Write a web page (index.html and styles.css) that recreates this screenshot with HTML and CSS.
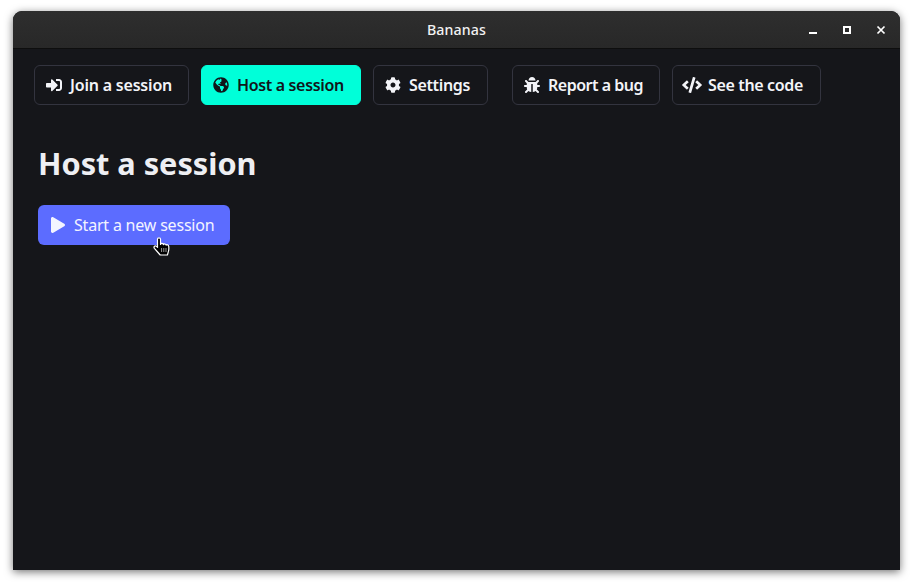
FILE: index.html
```html
<!DOCTYPE html>
<html lang="en">
<head>
<meta charset="utf-8">
<title>Bananas</title>
<link rel="stylesheet" href="styles.css">
</head>
<body>
<div class="window">
  <header class="titlebar">
    <span class="title">Bananas</span>
    <div class="controls">
      <svg class="ctl" viewBox="0 0 10 10"><rect x="1" y="7" width="8" height="2" fill="#fff"/></svg>
      <svg class="ctl" viewBox="0 0 10 10"><path d="M1 1h8v8H1z M3 3v4h4V3z" fill="#fff" fill-rule="evenodd"/></svg>
      <svg class="ctl" viewBox="0 0 10 10"><path d="M1.5 1.5l7 7M8.5 1.5l-7 7" stroke="#fff" stroke-width="1.7" fill="none"/></svg>
    </div>
  </header>
  <main class="content">
    <nav class="nav">
      <div class="group">
        <a class="btn w-join"><span class="slot"><svg class="icon" viewBox="0 0 512 512"><path d="M416 448h-84c-6.6 0-12-5.4-12-12v-40c0-6.6 5.4-12 12-12h84c17.7 0 32-14.3 32-32V160c0-17.7-14.3-32-32-32h-84c-6.6 0-12-5.4-12-12V76c0-6.6 5.4-12 12-12h84c53 0 96 43 96 96v192c0 53-43 96-96 96zm-47-201L201 79c-15-15-41-4.5-41 17v96H24c-13.3 0-24 10.7-24 24v96c0 13.3 10.7 24 24 24h136v96c0 21.5 26 32 41 17l168-168c9.3-9.4 9.3-24.6 0-34z"/></svg></span>Join a session</a>
        <a class="btn active w-host"><span class="slot"><svg class="icon" viewBox="0 0 496 512"><path d="M248 8C111.03 8 0 119.03 0 256s111.03 248 248 248 248-111.03 248-248S384.97 8 248 8zm82.29 357.6c-3.9 3.88-7.99 7.95-11.31 11.28-2.99 3-5.1 6.7-6.17 10.71-1.51 5.66-2.73 11.38-4.77 16.87l-17.39 46.85c-13.76 3-28 4.69-42.65 4.69v-27.38c1.69-12.62-7.64-36.26-22.63-51.25-6-6-9.37-14.14-9.37-22.63v-32.01c0-11.64-6.27-22.34-16.46-27.97-14.37-7.95-34.81-19.06-48.81-26.11-11.48-5.78-22.1-13.14-31.65-21.75l-.8-.72a114.792 114.792 0 0 1-18.06-20.74c-9.38-13.77-24.66-36.42-34.59-51.14 20.47-45.5 57.36-82.04 103.2-101.89l24.01 12.01C203.48 89.74 216 82.01 216 70.11v-11.3c7.99-1.29 16.12-2.11 24.45-2.42l28.3 28.3c6.25 6.25 6.25 16.38 0 22.63L264 112l-10.34 10.34c-3.12 3.12-3.12 8.19 0 11.31l4.69 4.69c3.12 3.12 3.12 8.19 0 11.31l-8 8a8.008 8.008 0 0 1-5.66 2.34h-8.99c-2.08 0-4.08.81-5.58 2.27l-9.92 9.65a8.008 8.008 0 0 0-1.58 9.31l15.59 31.19c2.66 5.32-1.21 11.58-7.15 11.58h-5.64c-1.93 0-3.79-.7-5.24-1.96l-9.28-8.06a16.017 16.017 0 0 0-15.55-3.1l-31.17 10.39a11.95 11.95 0 0 0-8.17 11.34c0 4.53 2.56 8.66 6.61 10.69l11.08 5.54c9.41 4.71 19.79 7.16 30.31 7.16s22.59 27.29 32 32h66.75c8.49 0 16.62 3.37 22.63 9.37l13.69 13.69a30.503 30.503 0 0 1 8.93 21.57 46.536 46.536 0 0 1-13.72 32.98zM417 274.25c-5.79-1.45-10.84-5-14.15-9.97l-17.98-26.97a23.97 23.97 0 0 1 0-26.62l19.59-29.38c2.32-3.47 5.5-6.29 9.24-8.15l12.98-6.49C440.2 193.59 448 223.87 448 256c0 8.67-.74 17.16-1.82 25.54L417 274.25z"/></svg></span>Host a session</a>
        <a class="btn w-settings"><span class="slot"><svg class="icon" viewBox="0 0 512 512"><path d="M487.4 315.7l-42.6-24.6c4.3-23.2 4.3-47 0-70.2l42.6-24.6c4.9-2.8 7.1-8.6 5.5-14-11.1-35.6-30-67.8-54.7-94.6-3.8-4.1-10-5.1-14.8-2.3L380.8 110c-17.9-15.4-38.5-27.3-60.8-35.1V25.8c0-5.6-3.9-10.5-9.4-11.7-36.7-8.2-74.3-7.8-109.2 0-5.5 1.2-9.4 6.1-9.4 11.7V75c-22.2 7.9-42.8 19.8-60.8 35.1L88.7 85.5c-4.9-2.8-11-1.9-14.8 2.3-24.7 26.7-43.6 58.9-54.7 94.6-1.7 5.4.6 11.2 5.5 14L67.3 221c-4.3 23.2-4.3 47 0 70.2l-42.6 24.6c-4.9 2.8-7.1 8.6-5.5 14 11.1 35.6 30 67.8 54.7 94.6 3.8 4.1 10 5.1 14.8 2.3l42.6-24.6c17.9 15.4 38.5 27.3 60.8 35.1v49.2c0 5.6 3.9 10.5 9.4 11.7 36.7 8.2 74.3 7.8 109.2 0 5.5-1.2 9.4-6.1 9.4-11.7v-49.2c22.2-7.9 42.8-19.8 60.8-35.1l42.6 24.6c4.9 2.8 11 1.9 14.8-2.3 24.7-26.7 43.6-58.9 54.7-94.6 1.5-5.5-.7-11.3-5.6-14.1zM256 336c-44.1 0-80-35.9-80-80s35.9-80 80-80 80 35.9 80 80-35.9 80-80 80z"/></svg></span>Settings</a>
      </div>
      <div class="group">
        <a class="btn w-bug"><span class="slot"><svg class="icon" viewBox="0 0 512 512"><path d="M511.988 288.9c-.478 17.43-15.217 31.1-32.653 31.1H424v16c0 21.864-4.882 42.584-13.6 61.145l60.228 60.228c12.496 12.497 12.496 32.758 0 45.255-12.498 12.497-32.759 12.496-45.256 0l-54.736-54.736C345.886 467.965 314.351 480 280 480V236c0-6.627-5.373-12-12-12h-24c-6.627 0-12 5.373-12 12v244c-34.351 0-65.886-12.035-90.636-32.108l-54.736 54.736c-12.498 12.497-32.759 12.496-45.256 0-12.496-12.497-12.496-32.758 0-45.255l60.228-60.228C92.882 378.584 88 357.864 88 336v-16H32.666C15.23 320 .491 306.33.013 288.9-.484 270.816 14.028 256 32 256h56v-58.745l-46.628-46.628c-12.496-12.497-12.496-32.758 0-45.255 12.498-12.497 32.758-12.497 45.256 0L141.255 160h229.489l54.627-54.627c12.498-12.497 32.758-12.497 45.256 0 12.496 12.497 12.496 32.758 0 45.255L424 197.255V256h56c17.972 0 32.484 14.816 31.988 32.9zM257 0c-61.856 0-112 50.144-112 112h224C369 50.144 318.856 0 257 0z"/></svg></span>Report a bug</a>
        <a class="btn w-code"><span class="slot"><svg class="icon icon-wide" viewBox="0 0 640 512"><path d="M278.9 511.5l-61-17.7c-6.4-1.8-10-8.5-8.2-14.9L346.2 8.7c1.8-6.4 8.5-10 14.9-8.2l61 17.7c6.4 1.8 10 8.5 8.2 14.9L293.8 503.3c-1.9 6.4-8.5 10.1-14.9 8.2zm-114-112.2l43.5-46.4c4.6-4.9 4.3-12.7-.8-17.2L117 256l90.6-79.7c5.1-4.5 5.5-12.3.8-17.2l-43.5-46.4c-4.5-4.8-12.1-5.1-17-.5L3.8 247.2c-5.1 4.7-5.1 12.8 0 17.5l144.1 135.1c4.9 4.6 12.5 4.4 17-.5zm327.2.6l144.1-135.1c5.1-4.7 5.1-12.8 0-17.5L492.1 112.1c-4.8-4.5-12.4-4.3-17 .5L431.6 159c-4.6 4.9-4.3 12.7.8 17.2L523 256l-90.6 79.7c-5.1 4.5-5.5 12.3-.8 17.2l43.5 46.4c4.5 4.9 12.1 5.1 17 .6z"/></svg></span>See the code</a>
      </div>
    </nav>
    <section class="page">
      <h1 class="heading">Host a session</h1>
      <a class="start"><span class="slot"><svg class="icon-play" viewBox="0 0 448 512"><path d="M424.4 214.7L72.4 6.6C43.8-10.3 0 6.1 0 47.9V464c0 37.5 40.7 60.1 72.4 41.3l352-208c31.4-18.5 31.5-64.1 0-82.6z"/></svg></span>Start a new session
        <svg class="cursor" viewBox="0 0 18 19"><path d="M4.5 2c0-1.6 3-1.6 3 0v5.4c.6-1.4 2.6-1.2 2.9.2.6-1 2.4-.8 2.7.5.7-.7 2.4-.4 2.6 1 .3 2.2.2 4-.4 5.8l-.9 3.1H7.2L4.6 15 1.4 11.4c-1.2-1.6.8-3.3 2.1-2l1 1z" fill="#000" stroke="#fff" stroke-width="1.2" stroke-linejoin="round"/><path d="M8.6 11v4M10.8 11v4M13 11v4" stroke="#fff" stroke-width=".6"/></svg>
      </a>
    </section>
  </main>
</div>
</body>
</html>
```

FILE: styles.css
```css
* { box-sizing: border-box; }
html, body { margin: 0; height: 100%; background: #fff; overflow: hidden; }
body { padding: 11px 13px 16px; font-family: "Noto Sans", sans-serif; }
.window {
  height: 559px;
  display: flex;
  flex-direction: column;
  border-radius: 9px 9px 0 0;
  background: #15161a;
  box-shadow: 0 2px 9px rgba(0, 0, 0, .55);
  overflow: hidden;
}
.titlebar {
  position: relative;
  flex: none;
  height: 38px;
  display: flex;
  align-items: center;
  justify-content: center;
  padding-bottom: 1px;
  background: linear-gradient(#2e2e2e, #282828);
  border-bottom: 1px solid #0e0e0e;
  color: #f2f2f2;
}
.title { font-size: 14.2px; font-weight: 500; letter-spacing: .1px; }
.controls {
  position: absolute;
  right: 14px;
  top: 14px;
  display: flex;
  gap: 24px;
}
.ctl { width: 10px; height: 10px; display: block; }
.content { flex: 1; }
.nav { display: flex; gap: 24px; padding: 16px 21px 0; }
.group { display: flex; gap: 12px; }
.btn {
  height: 40px;
  display: flex;
  align-items: center;
  gap: 6px;
  padding: 0 9px;
  border: 1px solid #33343f;
  border-radius: 6px;
  color: #f3f4f8;
  font-size: 16px;
  font-weight: 600;
  letter-spacing: -.35px;
  white-space: nowrap;
}
.active { background: #00ffd9; border-color: #00ffd9; color: #10161a; }
.w-join { width: 155px; letter-spacing: -.2px; }
.w-host { width: 160px; }
.w-settings { width: 115px; }
.w-bug { width: 148px; letter-spacing: -.5px; }
.w-code { width: 149px; }
.slot { width: 20px; display: flex; justify-content: center; flex: none; }
.icon { width: 16px; height: 16px; fill: currentColor; display: block; }
.icon-wide { width: 20px; }
.page { padding: 35px 25px 0; }
.heading {
  margin: 0 0 19px;
  color: #eeeff3;
  font-size: 30.7px;
  line-height: 46px;
  font-weight: 700;
}
.start {
  position: relative;
  width: 192px;
  height: 40px;
  display: flex;
  align-items: center;
  gap: 6px;
  padding: 0 10px;
  border-radius: 6px;
  background: #5c6cff;
  color: #f3f4ff;
  font-size: 16px;
  letter-spacing: -.2px;
  white-space: nowrap;
}
.icon-play { width: 14px; height: 16px; fill: currentColor; display: block; }
.cursor { position: absolute; left: 115px; top: 32px; width: 18px; height: 19px; }
```
